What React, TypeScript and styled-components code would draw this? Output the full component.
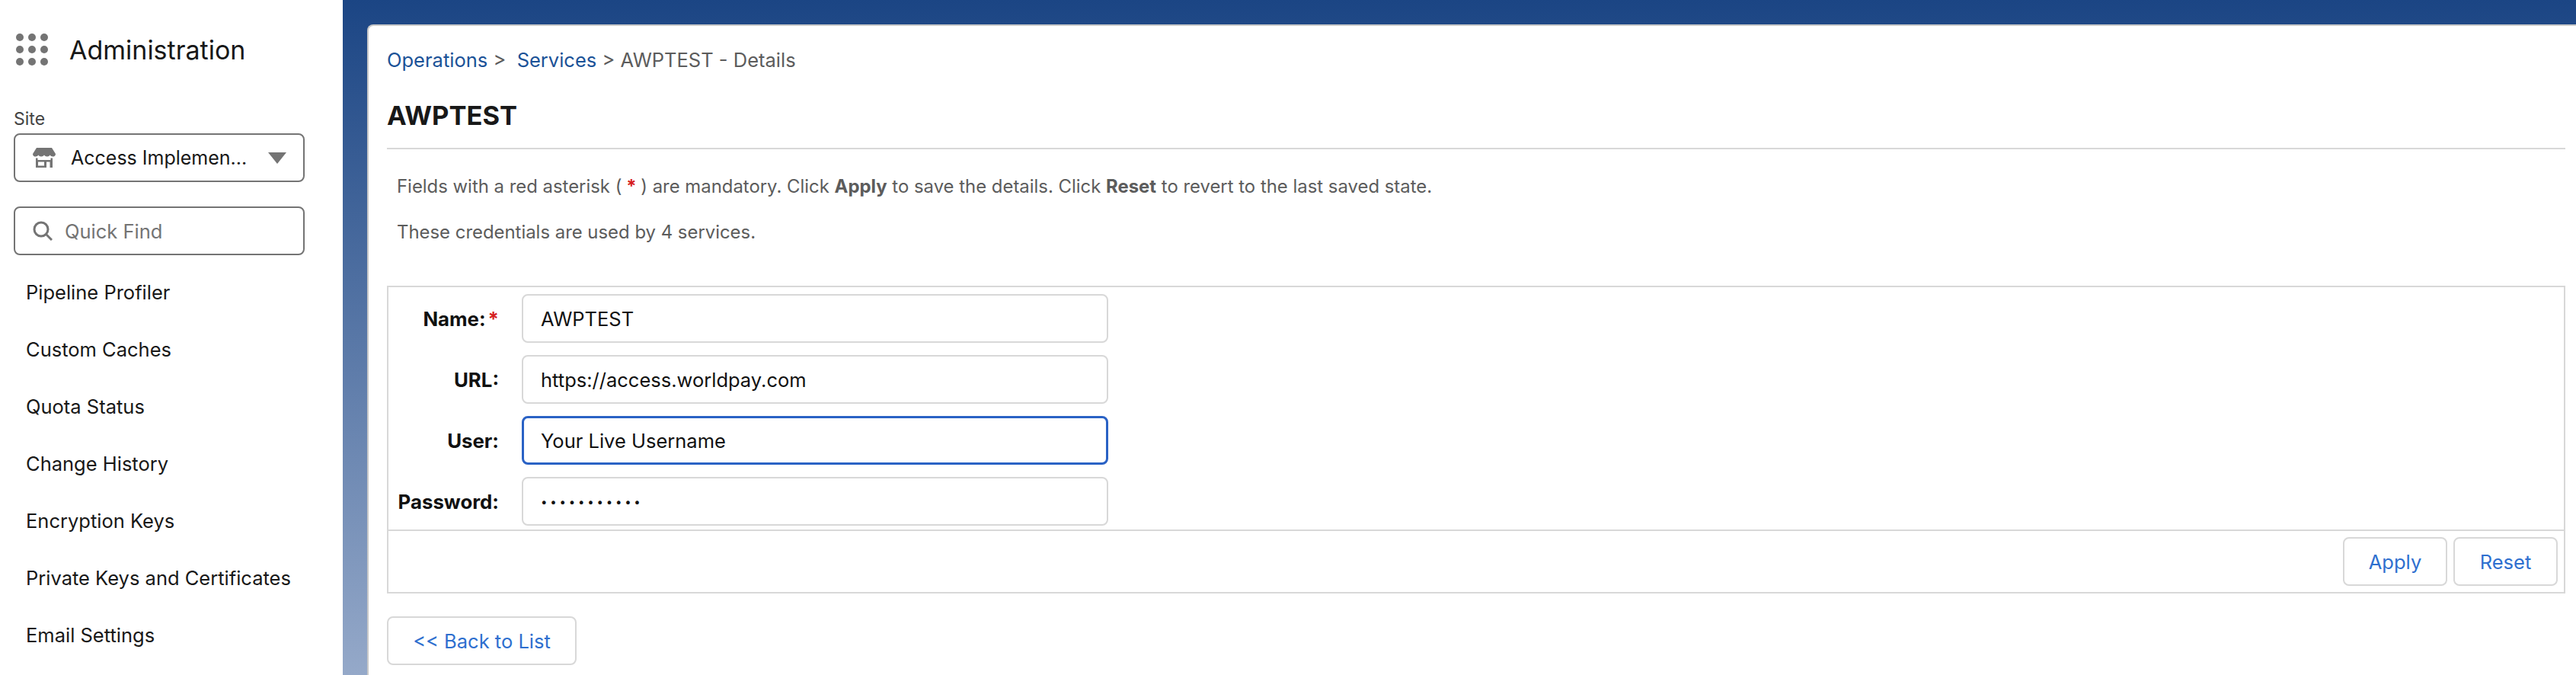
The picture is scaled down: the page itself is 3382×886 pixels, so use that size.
import React from 'react';
import styled, { createGlobalStyle } from 'styled-components';

const GlobalStyle = createGlobalStyle`
  html, body {
    margin: 0;
    padding: 0;
    background: #fff;
  }
  * {
    box-sizing: border-box;
  }
`;

const Page = styled.div`
  display: grid;
  grid-template-columns: 450px 1fr;
  width: 3382px;
  height: 886px;
  overflow: hidden;
  font-family: Inter, "Liberation Sans", sans-serif;
`;

const Sidebar = styled.aside`
  background: #fff;
  padding: 44px 50px 0 18px;
`;

const AppHeader = styled.div`
  display: flex;
  align-items: center;
  gap: 28px;
  padding-left: 3px;
  height: 42px;
  font-size: 34px;
  color: #181818;
`;

const SiteLabel = styled.div`
  margin-top: 58px;
  font-size: 23px;
  line-height: 24px;
  color: #444;
`;

const Box = styled.div`
  display: flex;
  align-items: center;
  width: 382px;
  height: 64px;
  border: 2px solid #747474;
  border-radius: 8px;
  padding: 0 22px 0 23px;
`;

const SiteSelect = styled(Box)`
  margin-top: 7px;
  gap: 20px;
  font-size: 25px;
  color: #181818;
`;

const Caret = styled.div`
  margin-left: auto;
  width: 0;
  height: 0;
  border-left: 12px solid transparent;
  border-right: 12px solid transparent;
  border-top: 15px solid #747474;
`;

const QuickFind = styled(Box)`
  margin-top: 32px;
  gap: 16px;
  font-size: 25.5px;
  color: #747474;
`;

const NavList = styled.nav`
  display: flex;
  flex-direction: column;
  margin-top: 11px;
  padding-left: 16px;
`;

const NavItem = styled.div`
  height: 75px;
  line-height: 75px;
  font-size: 25.5px;
  color: #181818;
  white-space: nowrap;
`;

const Main = styled.main`
  padding: 32px 0 0 32px;
  background: linear-gradient(180deg, #1b4584 0%, #95a9c9 100%);
`;

const Card = styled.section`
  height: 100%;
  background: #fff;
  border-top: 2px solid #c9c9c9;
  border-left: 2px solid #c9c9c9;
  border-top-left-radius: 8px;
  padding: 27px 14px 0 24px;
`;

const Breadcrumbs = styled.div`
  font-size: 25.5px;
  line-height: 36px;
  color: #5c5c5c;
`;

const Crumb = styled.a`
  color: #1b5297;
  text-decoration: none;
`;

const Title = styled.h1`
  margin: 35px 0 0;
  height: 64px;
  border-bottom: 2px solid #d8d8d8;
  font-size: 34.5px;
  line-height: 40px;
  font-weight: 700;
  color: #181818;
`;

const Notes = styled.div`
  display: flex;
  flex-direction: column;
  gap: 32px;
  margin-top: 35px;
  padding-left: 13px;
  font-size: 23.9px;
  line-height: 28px;
  color: #5c5c5c;
`;

const Note = styled.p`
  margin: 0;
`;

const Req = styled.span`
  margin: 0 -1px;
  color: #d61f1f;
  font-weight: 700;
`;

const FormBox = styled.div`
  margin-top: 56px;
  border: 2px solid #d8d8d8;
`;

const Fields = styled.div`
  display: flex;
  flex-direction: column;
  gap: 16px;
  padding: 9px 0 5px;
`;

const FieldRow = styled.div`
  display: grid;
  grid-template-columns: 145px 770px;
  column-gap: 30px;
  align-items: center;
`;

const FieldLabel = styled.label`
  text-align: right;
  white-space: nowrap;
  font-size: 25.8px;
  font-weight: 700;
  color: #111;
`;

const LabelStar = styled.span`
  margin-left: 3px;
  color: #d61f1f;
`;

const Input = styled.input<{ $focused?: boolean; $secret?: boolean }>`
  width: 100%;
  height: 64px;
  padding: 0 ${(p) => (p.$focused ? '22px' : '23px')};
  background: #fff;
  border: ${(p) => (p.$focused ? '3px solid #2a62c5' : '2px solid #d8d8d8')};
  border-radius: 8px;
  outline: none;
  font-family: inherit;
  font-size: ${(p) => (p.$secret ? '15px' : '25.5px')};
  letter-spacing: ${(p) => (p.$secret ? '3.800px' : 'normal')};
  color: #111;
`;

const ButtonBar = styled.div`
  display: flex;
  justify-content: flex-end;
  gap: 8px;
  border-top: 2px solid #d8d8d8;
  padding: 8px 8px 8px 0;
`;

const Button = styled.button`
  width: 137px;
  height: 64px;
  background: #fff;
  border: 2px solid #d8d8d8;
  border-radius: 8px;
  font-family: inherit;
  font-size: 25.5px;
  color: #2e6fcf;
`;

const BackButton = styled(Button)`
  display: block;
  width: 249px;
  margin-top: 30px;
`;

const navItems = [
  'Pipeline Profiler',
  'Custom Caches',
  'Quota Status',
  'Change History',
  'Encryption Keys',
  'Private Keys and Certificates',
  'Email Settings',
];

function GridIcon() {
  const points = [5, 21, 37];
  return (
    <svg width="42" height="42" viewBox="0 0 42 42" fill="#747474">
      {points.map((y) =>
        points.map((x) => <circle key={`${x}-${y}`} cx={x} cy={y} r="5" />),
      )}
    </svg>
  );
}

function StoreIcon() {
  return (
    <svg width="30" height="26" viewBox="0 0 30 26" fill="#747474" style={{ flex: 'none' }}>
      <path d="M5 0h20l5 8c0 2.6-2 3.6-3.7 3.6-1.7 0-2.9-1-3.7-2-.7 1-2 2-3.7 2-1.7 0-3-1-3.9-2-.9 1-2.200 2-3.900 2-1.700 0-3-1-3.700-2-.8 1-2 2-3.700 2C2 11.600 0 10.600 0 8z" />
      <path d="M4 13.500h2.500V16h17v-2.500H26V26h-3.500v-7.500H18V26H4zm3 5V23.500h8v-5z" fillRule="evenodd" />
    </svg>
  );
}

function SearchIcon() {
  return (
    <svg width="26" height="26" viewBox="0 0 26 26" fill="none" stroke="#747474" strokeWidth="3" style={{ flex: 'none' }}>
      <circle cx="11" cy="11" r="9" />
      <path d="M17.500 17.500L25 25" />
    </svg>
  );
}

export default function App() {
  return (
    <Page>
      <GlobalStyle />
      <Sidebar>
        <AppHeader>
          <GridIcon />
          <span>Administration</span>
        </AppHeader>
        <SiteLabel>Site</SiteLabel>
        <SiteSelect>
          <StoreIcon />
          <span>Access Implemen...</span>
          <Caret />
        </SiteSelect>
        <QuickFind>
          <SearchIcon />
          <span>Quick Find</span>
        </QuickFind>
        <NavList>
          {navItems.map((item) => (
            <NavItem key={item}>{item}</NavItem>
          ))}
        </NavList>
      </Sidebar>
      <Main>
        <Card>
          <Breadcrumbs>
            <Crumb href="#">Operations</Crumb> &gt;&nbsp; <Crumb href="#">Services</Crumb> &gt; AWPTEST - Details
          </Breadcrumbs>
          <Title>AWPTEST</Title>
          <Notes>
            <Note>
              Fields with a red asterisk ( <Req>*</Req> ) are mandatory. Click <b>Apply</b> to save the details. Click{' '}
              <b>Reset</b> to revert to the last saved state.
            </Note>
            <Note>These credentials are used by 4 services.</Note>
          </Notes>
          <FormBox>
            <Fields>
              <FieldRow>
                <FieldLabel>
                  Name:<LabelStar>*</LabelStar>
                </FieldLabel>
                <Input readOnly value="AWPTEST" />
              </FieldRow>
              <FieldRow>
                <FieldLabel>URL:</FieldLabel>
                <Input readOnly value="https://access.worldpay.com" />
              </FieldRow>
              <FieldRow>
                <FieldLabel>User:</FieldLabel>
                <Input readOnly $focused value="Your Live Username" />
              </FieldRow>
              <FieldRow>
                <FieldLabel>Password:</FieldLabel>
                <Input readOnly $secret type="password" value="abcdefghijk" />
              </FieldRow>
            </Fields>
            <ButtonBar>
              <Button>Apply</Button>
              <Button>Reset</Button>
            </ButtonBar>
          </FormBox>
          <BackButton>&lt;&lt; Back to List</BackButton>
        </Card>
      </Main>
    </Page>
  );
}
